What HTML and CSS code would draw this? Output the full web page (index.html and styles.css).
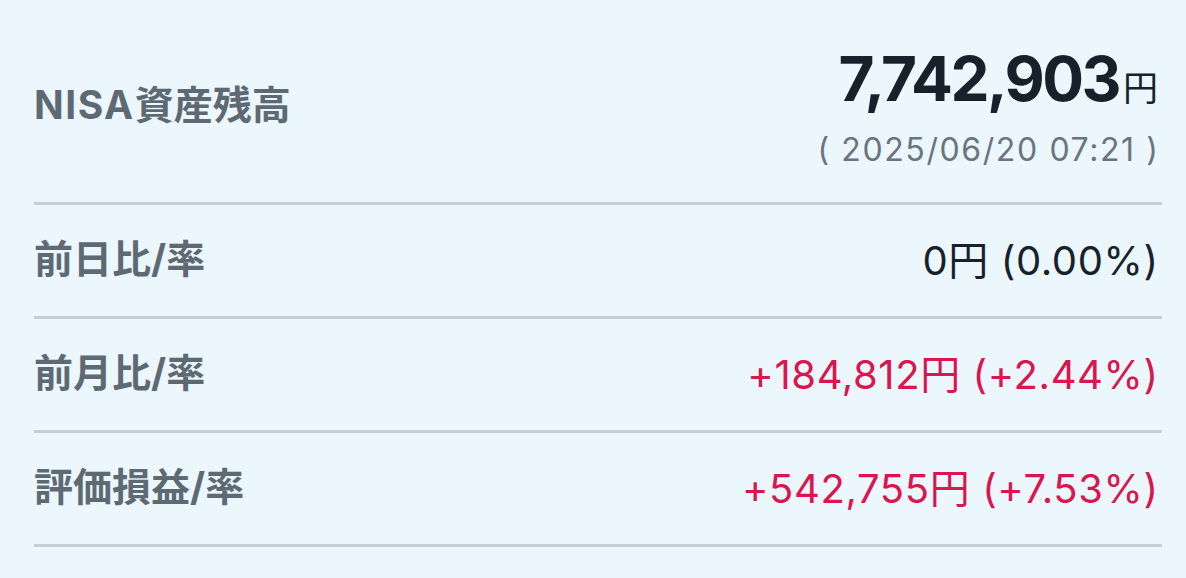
FILE: index.html
```html
<!DOCTYPE html>
<html lang="ja">
<head>
<meta charset="utf-8">
<link rel="stylesheet" href="styles.css">
</head>
<body>
<div class="summary">
  <div class="row row-total">
    <div class="label"><span class="latin">NISA</span>資産残高</div>
    <div class="total">
      <div class="amount"><span class="num">7,742,903</span><span class="yen">円</span></div>
      <div class="date">( 2025/06/20 07:21 )</div>
    </div>
  </div>
  <div class="row">
    <div class="label">前日比/率</div>
    <div class="value">0円 (0.00%)</div>
  </div>
  <div class="row">
    <div class="label">前月比/率</div>
    <div class="value plus">+184,812円 (+2.44%)</div>
  </div>
  <div class="row">
    <div class="label">評価損益/率</div>
    <div class="value plus">+542,755円 (+7.53%)</div>
  </div>
</div>
</body>
</html>
```
FILE: styles.css
```css
html, body {
  margin: 0;
  padding: 0;
  background: #ebf6fd;
}
body {
  font-family: Inter, "Noto Sans CJK JP", sans-serif;
  width: 1186px;
  height: 578px;
  overflow: hidden;
}
.summary {
  margin: 0 24px 0 34px;
}
.row {
  display: flex;
  align-items: center;
  justify-content: space-between;
  height: 111px;
  border-bottom: 3px solid #c4cfd9;
}
.row-total {
  height: 202px;
  align-items: flex-start;
}
.row-total .label {
  margin-top: 83px;
}
.label {
  font-size: 39px;
  font-weight: 700;
  color: #5e6a73;
  line-height: 44px;
  margin-top: -4px;
}
.latin {
  letter-spacing: 1.5px;
}
.total {
  display: flex;
  flex-direction: column;
  align-items: flex-end;
  padding-right: 4px;
  padding-top: 47px;
}
.amount {
  display: flex;
  align-items: baseline;
  line-height: 64px;
}
.num {
  font-size: 62px;
  font-weight: 700;
  color: #17212b;
  letter-spacing: -2.5px;
}
.yen {
  font-size: 35px;
  color: #17212b;
  margin-left: 4px;
}
.date {
  font-size: 32px;
  color: #69747e;
  line-height: 36px;
  margin-top: 12px;
  letter-spacing: 1.6px;
  margin-right: -1.6px;
}
.value {
  font-size: 40px;
  color: #17212b;
  padding-right: 4px;
  line-height: 44px;
  letter-spacing: 0.6px;
  margin-right: -0.6px;
}
.value.plus {
  color: #d9164f;
}
```
